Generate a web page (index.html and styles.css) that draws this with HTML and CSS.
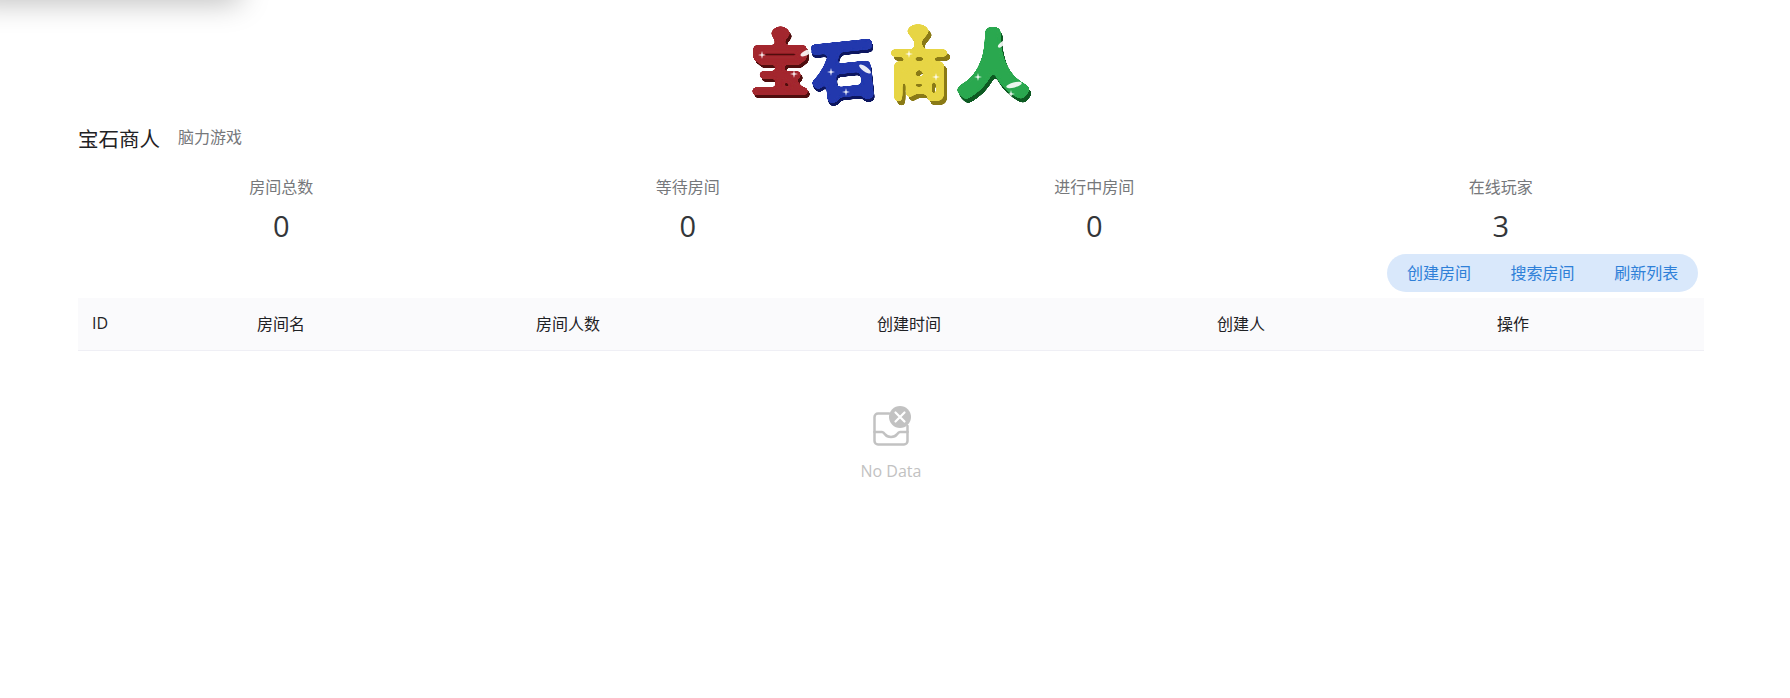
FILE: index.html
```html
<!DOCTYPE html>
<html lang="zh-CN">
<head>
<meta charset="utf-8">
<title>宝石商人</title>
<link rel="stylesheet" href="styles.css">
</head>
<body>
<div class="top-shadow"></div>
<main class="page">
  <div class="logo-row">
    <svg class="logo" width="290" height="90" viewBox="0 0 290 90" role="img" aria-label="宝石商人">
      <defs>
        <path id="spark" d="M0-4L.8-.8 4 0 .8.8 0 4-.8.8-4 0-.8-.8z"/>
        <filter id="goo-red" x="-20%" y="-20%" width="140%" height="140%">
          <feGaussianBlur in="SourceGraphic" stdDeviation="2"/>
          <feColorMatrix type="matrix" values="1 0 0 0 0  0 1 0 0 0  0 0 1 0 0  0 0 0 20 -9" result="g"/>
          <feOffset in="g" dx="2" dy="3" result="o"/>
          <feFlood flood-color="#4f0c10"/>
          <feComposite in2="o" operator="in" result="s"/>
          <feMerge><feMergeNode in="s"/><feMergeNode in="g"/></feMerge>
        </filter>
        <filter id="goo-blue" x="-20%" y="-20%" width="140%" height="140%">
          <feGaussianBlur in="SourceGraphic" stdDeviation="2"/>
          <feColorMatrix type="matrix" values="1 0 0 0 0  0 1 0 0 0  0 0 1 0 0  0 0 0 20 -9" result="g"/>
          <feOffset in="g" dx="1" dy="3" result="o"/>
          <feFlood flood-color="#0d1760"/>
          <feComposite in2="o" operator="in" result="s"/>
          <feMerge><feMergeNode in="s"/><feMergeNode in="g"/></feMerge>
        </filter>
        <filter id="goo-yellow" x="-20%" y="-20%" width="140%" height="140%">
          <feGaussianBlur in="SourceGraphic" stdDeviation="2"/>
          <feColorMatrix type="matrix" values="1 0 0 0 0  0 1 0 0 0  0 0 1 0 0  0 0 0 20 -9" result="g"/>
          <feOffset in="g" dx="3" dy="4" result="o"/>
          <feFlood flood-color="#8a7a12"/>
          <feComposite in2="o" operator="in" result="s"/>
          <feMerge><feMergeNode in="s"/><feMergeNode in="g"/></feMerge>
        </filter>
        <filter id="goo-green" x="-20%" y="-20%" width="140%" height="140%">
          <feGaussianBlur in="SourceGraphic" stdDeviation="2"/>
          <feColorMatrix type="matrix" values="1 0 0 0 0  0 1 0 0 0  0 0 1 0 0  0 0 0 20 -9" result="g"/>
          <feOffset in="g" dx="2" dy="4" result="o"/>
          <feFlood flood-color="#0a5a22"/>
          <feComposite in2="o" operator="in" result="s"/>
          <feMerge><feMergeNode in="s"/><feMergeNode in="g"/></feMerge>
        </filter>
      </defs>
      <g class="gem-red">
        <path class="d" d="M26 11l5-5h7l5 5-9 12z"/>
        <text class="ch ch-dense" x="4" y="68" font-size="60">宝</text>
      </g>
      <g class="gem-blue">
        <text class="ch ch-open" x="66" y="71" font-size="64" transform="rotate(-6 100 50)">石</text>
      </g>
      <g class="gem-yellow">
        <path class="d" d="M162 9l5-5h10l5 5-10 12z"/>
        <text class="ch ch-dense" x="143" y="73" font-size="60">商</text>
      </g>
      <g class="gem-green">
        <text class="ch ch-bold" x="213" y="67" font-size="68">人</text>
      </g>
      <g class="shine">
        <ellipse cx="60" cy="31" rx="6" ry="2.500" transform="rotate(-25 60 31)"/>
        <ellipse cx="119" cy="47" rx="7" ry="2.500" transform="rotate(35 119 47)"/>
        <ellipse cx="268" cy="63" rx="8" ry="2.500" transform="rotate(-15 268 63)"/>
        <ellipse cx="256" cy="22" rx="5" ry="2" transform="rotate(-40 256 22)"/>
        <use href="#spark" x="16" y="33"/><use href="#spark" x="48" y="52"/><use href="#spark" x="85" y="50"/><use href="#spark" x="100" y="70"/>
        <use href="#spark" x="163" y="32"/><use href="#spark" x="190" y="55"/><use href="#spark" x="232" y="55"/><use href="#spark" x="265" y="72"/>
      </g>
    </svg>
  </div>
  <header class="title-row">
    <span class="title">宝石商人</span>
    <span class="subtitle">脑力游戏</span>
  </header>
  <section class="stats">
    <div class="stat"><div class="stat-label">房间总数</div><div class="stat-value">0</div></div>
    <div class="stat"><div class="stat-label">等待房间</div><div class="stat-value">0</div></div>
    <div class="stat"><div class="stat-label">进行中房间</div><div class="stat-value">0</div></div>
    <div class="stat"><div class="stat-label">在线玩家</div><div class="stat-value">3</div></div>
  </section>
  <div class="actions">
    <div class="pill">
      <button class="pill-btn">创建房间</button>
      <button class="pill-btn">搜索房间</button>
      <button class="pill-btn">刷新列表</button>
    </div>
  </div>
  <div class="table-head">
    <div class="th">ID</div>
    <div class="th">房间名</div>
    <div class="th">房间人数</div>
    <div class="th">创建时间</div>
    <div class="th">创建人</div>
    <div class="th">操作</div>
  </div>
  <div class="empty">
    <svg class="empty-icon" width="40" height="40" viewBox="0 0 40 40">
      <path class="tray" d="M18 7.500H7a3.500 3.500 0 0 0-3.500 3.500v24a3.500 3.500 0 0 0 3.500 3.500h26a3.500 3.500 0 0 0 3.500-3.500V20"/>
      <path class="tray" d="M3.500 26H11c1.500 0 2 .8 3 2.300s3 2.700 6 2.700 5-1.200 6-2.700 1.500-2.300 3-2.300h7.500"/>
      <circle class="badge" cx="29" cy="11" r="11"/>
      <path class="x" d="M24.500 6.500l9 9m0-9l-9 9"/>
    </svg>
    <div class="empty-text">No Data</div>
  </div>
</main>
</body>
</html>
```
FILE: styles.css
```css
* { box-sizing: border-box; }
html, body { margin: 0; height: 100%; background: #fff; overflow: hidden; }
body {
  font-family: "Open Sans", "Noto Sans CJK SC", sans-serif;
  color: #1f2225;
  font-size: 16px;
}
.top-shadow {
  position: absolute;
  left: -30px;
  top: -30px;
  width: 270px;
  height: 30px;
  box-shadow: 0 2px 30px rgba(0, 0, 0, .28);
}
.page { padding: 22px 86px 0 78px; }
.logo-row { display: flex; justify-content: center; height: 99px; }
.logo { display: block; overflow: visible; }
.ch {
  font-family: "Noto Sans CJK SC", sans-serif;
  font-weight: 400;
  stroke-linejoin: round;
  stroke-linecap: round;
  paint-order: stroke;
}
.ch-dense { stroke-width: 3.500px; }
.ch-open { stroke-width: 6px; }
.ch-bold { stroke-width: 10px; }
.gem-red { fill: #a3282e; stroke: #a3282e; filter: url(#goo-red); }
.gem-blue { fill: #2338ad; stroke: #2338ad; filter: url(#goo-blue); }
.gem-yellow { fill: #e7d545; stroke: #e7d545; filter: url(#goo-yellow); }
.gem-green { fill: #2aa84f; stroke: #2aa84f; filter: url(#goo-green); }
.d { stroke-width: 3px; stroke-linejoin: round; }
.shine { fill: #fff; opacity: .9; }
.title-row { display: flex; align-items: center; gap: 18px; height: 36px; }
.title { font-size: 20.500px; line-height: 36px; color: #1f2225; }
.subtitle { font-size: 16px; line-height: 36px; color: #76787b; position: relative; top: -2px; }
.stats { display: grid; grid-template-columns: repeat(4, 1fr); margin-top: 18px; width: 1626px; }
.stat { text-align: center; }
.stat-label { font-size: 16px; line-height: 24px; color: #76787b; }
.stat-value { font-size: 29px; line-height: 36px; margin-top: 9px; color: #333639; }
.actions { display: flex; justify-content: flex-end; margin-top: 10px; margin-right: 6px; }
.pill { display: flex; height: 38px; border-radius: 19px; background: #d9e8fb; }
.pill-btn {
  border: 0;
  background: none;
  padding: 0 19.800px 2px;
  font: inherit;
  font-size: 16px;
  color: #2f80d8;
}
.table-head {
  display: grid;
  grid-template-columns: 165px 279px 341px 340px 280px 1fr;
  width: 1626px;
  height: 53px;
  margin-top: 6px;
  padding-bottom: 3px;
  background: #fafafc;
  border-bottom: 1px solid #efeff5;
  align-items: center;
}
.th { padding-left: 14px; font-size: 16px; color: #1f2225; }
.empty { width: 1626px; display: flex; flex-direction: column; align-items: center; margin-top: 55px; }
.empty-icon { display: block; }
.tray { fill: none; stroke: #c2c2c2; stroke-width: 2.500px; stroke-linecap: round; }
.badge { fill: #c2c2c2; }
.x { stroke: #fff; stroke-width: 2.200px; fill: none; stroke-linecap: round; }
.empty-text { margin-top: 13px; font-size: 16px; line-height: 24px; color: #c2c2c2; }
```
